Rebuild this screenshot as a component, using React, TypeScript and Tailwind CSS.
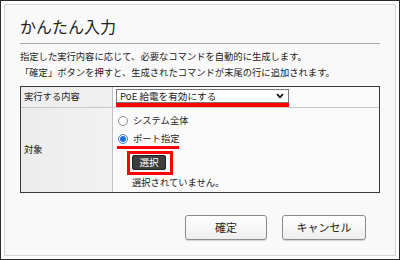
import React from 'react';

function Radio({ checked }: { checked?: boolean }) {
  return (
    <span
      className={
        'flex h-[10px] w-[10px] items-center justify-center rounded-full border bg-white ' +
        (checked ? 'border-[#3b7ddd]' : 'border-[#8a8a8a]')
      }
    >
      {checked && <span className="h-[6px] w-[6px] rounded-full bg-[#1e6fe0]" />}
    </span>
  );
}

function App() {
  return (
    <div className="h-[260px] w-[400px] border border-[#2a2a2a] bg-white p-[3px] font-['Noto_Sans_CJK_JP','Noto_Sans',sans-serif] text-[#222]">
      <div className="h-full border border-[#d6d6d6] bg-[#f9f9f9] px-[15px] pt-[10px]">
        <h1 className="text-[16px] leading-[22px] text-[#222]">かんたん入力</h1>
        <div className="mt-[6px] h-px bg-[#a8a8a8]" />

        <div className="mt-[4px] text-[9.3px] leading-[16px]">
          <p>指定した実行内容に応じて、必要なコマンドを自動的に生成します。</p>
          <p>「確定」ボタンを押すと、生成されたコマンドが末尾の行に追加されます。</p>
        </div>

        {/* table */}
        <div className="mt-[6px] border border-[#3a3a3a] text-[9.3px]">
          <div className="flex h-[21px] border-b border-[#c8c8c8]">
            <div className="flex w-[92px] items-center border-r border-[#c0c0c0] bg-[#efefef] pl-[3px]">
              実行する内容
            </div>
            <div className="flex-1 bg-[#fafafa] pl-[3px] pt-[2px]">
              <div className="flex h-[14px] w-[173px] items-center justify-between border border-[#7a7a7a] bg-white pl-[3px] pr-[4px] text-[9.6px]">
                <span>PoE 給電を有効にする</span>
                <svg width="8" height="6" viewBox="0 0 8 6">
                  <path d="M1 1.2 L4 4.3 L7 1.2" fill="none" stroke="#111" strokeWidth="1.8" />
                </svg>
              </div>
              <div className="h-[4px] w-[173px] bg-[#ff0000]" />
            </div>
          </div>

          <div className="flex h-[84px]">
            <div className="flex w-[92px] items-center border-r border-[#c0c0c0] bg-gradient-to-r from-[#ececec] to-[#f2f2f2] pl-[3px]">
              対象
            </div>
            <div className="flex-1 bg-[#fafafa] pl-[4px] pt-[6px]">
              <div className="flex h-[14px] items-center gap-[5px] pl-[1px]">
                <Radio />
                <span>システム全体</span>
              </div>
              <div className="mt-[4px] flex h-[14px] items-center gap-[5px] pl-[1px]">
                <Radio checked />
                <span>ポート指定</span>
              </div>
              <div className="h-[3px] w-[62px] bg-[#ff0000]" />
              <div className="ml-[10px] mt-[2px] w-fit border-[3px] border-[#ff0000] pb-[2px] pl-[2px] pr-[4px] pt-[1px]">
                <div className="flex h-[15px] w-[34px] items-center justify-center rounded-[2px] border border-[#222] bg-[#3d3d3d] text-[9.6px] text-white">
                  選択
                </div>
              </div>
              <p className="ml-[15px] leading-[14px]">選択されていません。</p>
            </div>
          </div>
        </div>

        <div className="mt-[22px] flex justify-end gap-[15px] pr-[14px] text-[11px]">
          <button className="h-[25px] w-[82px] rounded-[3px] border border-[#8c8c8c] bg-gradient-to-b from-white to-[#eeeeee] shadow-[0_1px_1px_rgba(0,0,0,0.15)]">
            確定
          </button>
          <button className="h-[25px] w-[84px] rounded-[3px] border border-[#8c8c8c] bg-gradient-to-b from-white to-[#eeeeee] shadow-[0_1px_1px_rgba(0,0,0,0.15)]">
            キャンセル
          </button>
        </div>
      </div>
    </div>
  );
}

export default App;
